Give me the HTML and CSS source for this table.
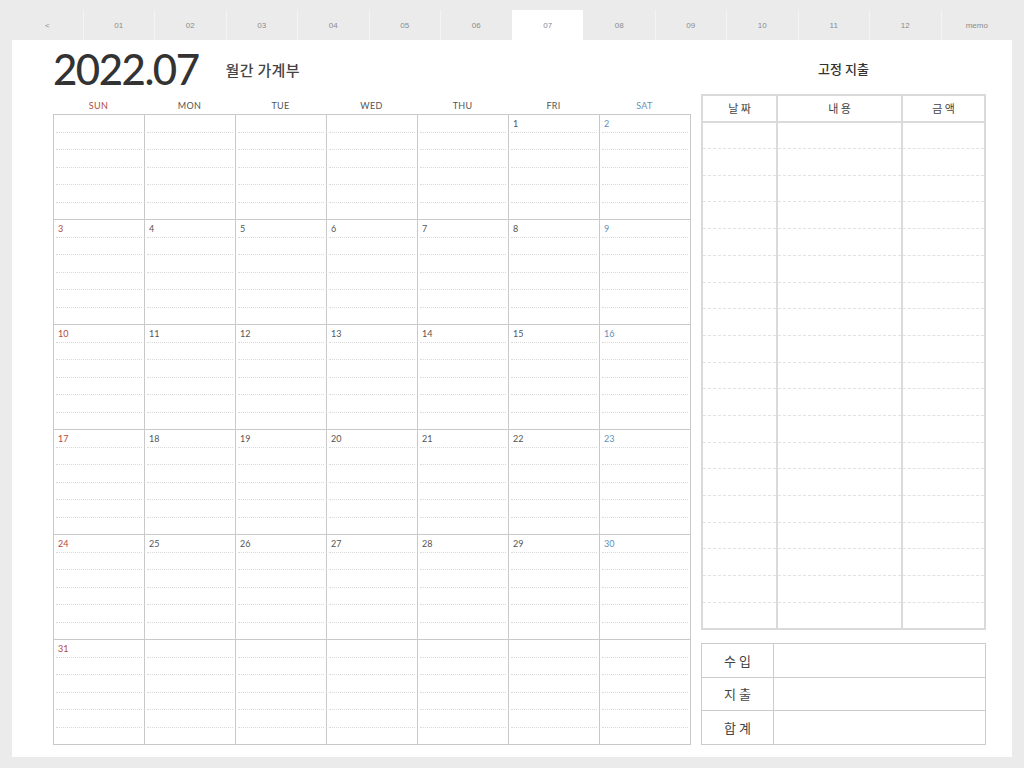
FILE: index.html
```html
<!DOCTYPE html>
<html>
  <head>
    <meta charset="utf-8">
    <link rel="stylesheet" href="styles.css">
  </head>
  <body>
    <div class="tabs">
      <div class="tab">&lt;</div>
      <div class="tab">01</div>
      <div class="tab">02</div>
      <div class="tab">03</div>
      <div class="tab">04</div>
      <div class="tab">05</div>
      <div class="tab">06</div>
      <div class="tab active">07</div>
      <div class="tab">08</div>
      <div class="tab">09</div>
      <div class="tab">10</div>
      <div class="tab">11</div>
      <div class="tab">12</div>
      <div class="tab">memo</div>
    </div>
    <div class="page">
      <div class="calendar-col">
        <div class="title-row">
          <h1>2022.07</h1>
          <span class="subtitle">월간 가계부</span>
        </div>
        <div class="weekdays">
          <div class="sun">SUN</div>
          <div>MON</div>
          <div>TUE</div>
          <div>WED</div>
          <div>THU</div>
          <div>FRI</div>
          <div class="sat">SAT</div>
        </div>
        <div class="grid" id="grid"></div>
      </div>
      <div class="side-col">
        <div class="side-title">고정 지출</div>
        <table class="fixed">
          <thead>
            <tr><th class="c-date">날 짜</th><th class="c-item">내 용</th><th class="c-amt">금 액</th></tr>
          </thead>
          <tbody id="fixed-body"></tbody>
        </table>
        <table class="summary">
          <tr><th>수 입</th><td></td></tr>
          <tr><th>지 출</th><td></td></tr>
          <tr><th>합 계</th><td></td></tr>
        </table>
      </div>
    </div>
    <script>
      // July 2022 starts on a Friday
      const grid = document.getElementById('grid');
      for (let i = 0; i < 42; i++) {
        const day = i - 4;
        const cell = document.createElement('div');
        cell.className = 'day';
        if (i % 7 === 0) cell.classList.add('sun');
        if (i % 7 === 6) cell.classList.add('sat');
        for (let l = 0; l < 6; l++) {
          const line = document.createElement('div');
          line.className = 'line';
          if (l === 0 && day >= 1 && day <= 31) line.textContent = day;
          cell.appendChild(line);
        }
        grid.appendChild(cell);
      }

      const body = document.getElementById('fixed-body');
      for (let r = 0; r < 19; r++) {
        const tr = document.createElement('tr');
        tr.innerHTML = '<td></td><td></td><td></td>';
        body.appendChild(tr);
      }
    </script>
  </body>
</html>
```

FILE: styles.css
```css
* {
  box-sizing: border-box;
  margin: 0;
  padding: 0;
}

body {
  background: #ebebeb;
  padding: 10px 12px 11px;
  font-family: Lato, "Noto Sans CJK KR", sans-serif;
  color: #444;
}

.tabs {
  display: flex;
  height: 30px;
}

.tab {
  flex: 1;
  display: flex;
  align-items: center;
  justify-content: center;
  font-family: "Liberation Sans", Arial, sans-serif;
  font-size: 8px;
  color: #8c8c8c;
  border-left: 1px solid #f4f4f4;
}

.tab:first-child {
  border-left: none;
}

.tab.active {
  background: #fff;
  border-left-color: #fff;
}

.tab.active + .tab {
  border-left-color: #ebebeb;
}

.page {
  background: #fff;
  height: 717px;
  display: flex;
  gap: 11px;
  padding: 0 26px 12px 41px;
}

.calendar-col {
  width: 637px;
  display: flex;
  flex-direction: column;
}

.title-row {
  height: 56px;
  display: flex;
  align-items: center;
  gap: 27px;
}

h1 {
  font-family: Lato, sans-serif;
  font-size: 42px;
  font-weight: 500;
  letter-spacing: -1.5px;
  color: #333;
  line-height: 1;
  margin-top: 2px;
}

.subtitle {
  font-family: "Noto Sans CJK KR", sans-serif;
  font-size: 15px;
  font-weight: 500;
  letter-spacing: 0.3px;
  color: #444;
  margin-top: 2px;
}

.weekdays {
  height: 18px;
  display: grid;
  grid-template-columns: repeat(7, 1fr);
  font-size: 9px;
  color: #555;
  text-align: center;
  letter-spacing: 0.3px;
  line-height: 18px;
  padding-top: 1px;
}

.weekdays .sun {
  color: #b24a3d;
}

.weekdays .sat {
  color: #6692b8;
}

.grid {
  display: grid;
  grid-template-columns: repeat(7, 91px);
  grid-template-rows: repeat(6, 105px);
  border-left: 1px solid #c9c9c9;
  border-top: 1px solid #c9c9c9;
  width: 638px;
}

.day {
  border-right: 1px solid #c9c9c9;
  border-bottom: 1px solid #c9c9c9;
  display: flex;
  flex-direction: column;
  padding: 0 2px;
}

.line {
  flex: 1;
  border-bottom: 1px dotted #d9d9d9;
  font-size: 9px;
  color: #555;
  padding: 3px 0 0 2px;
  line-height: 12px;
}

.line:last-child {
  border-bottom: none;
}

.day.sun .line {
  color: #b24a3d;
}

.day.sat .line {
  color: #5f8fb8;
}

.side-col {
  width: 285px;
  display: flex;
  flex-direction: column;
}

.side-title {
  height: 56px;
  display: flex;
  align-items: center;
  justify-content: center;
  font-family: "Noto Sans CJK KR", sans-serif;
  font-size: 13px;
  font-weight: 500;
  color: #333;
  padding-top: 4px;
}

table {
  border-collapse: collapse;
  width: 285px;
  font-family: "Noto Sans CJK KR", sans-serif;
}

.fixed {
  border: 2px solid #dadada;
}

.fixed th {
  height: 27px;
  font-size: 11px;
  font-weight: 400;
  color: #444;
  border-left: 2px solid #dadada;
  border-bottom: 2px solid #dadada;
}

.fixed .c-date {
  width: 75px;
}

.fixed .c-item {
  width: 125px;
}

.fixed td {
  height: 26.7px;
  border-left: 2px solid #dadada;
  border-bottom: 1px dashed #e2e2e2;
}

.fixed tr:last-child td {
  border-bottom: none;
}

.summary {
  margin-top: 13px;
  border: 1px solid #cccccc;
}

.summary th {
  width: 72px;
  height: 33.7px;
  font-size: 13px;
  font-weight: 400;
  color: #444;
  border: 1px solid #cccccc;
}

.summary td {
  border: 1px solid #cccccc;
}
```
